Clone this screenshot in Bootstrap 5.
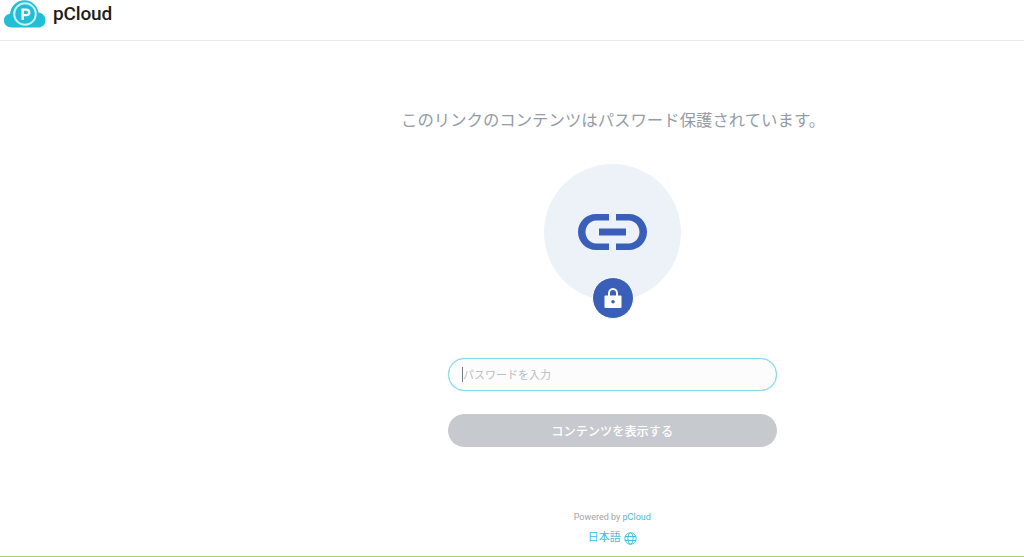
<!DOCTYPE html>
<html lang="ja">
<head>
<meta charset="utf-8">
<title>pCloud</title>
<link rel="stylesheet" href="https://cdn.jsdelivr.net/npm/bootstrap@5.3.0/dist/css/bootstrap.min.css">
<style>
html,body{height:100%;overflow:hidden}
body{font-family:Roboto,"Noto Sans CJK JP",sans-serif;background:#fff;display:flex;flex-direction:column;height:557px;border-bottom:1px solid #a5d078}
.top-bar{height:41px;border-bottom:1px solid #e9e9e9;flex:none}
.brand-name{font-family:Roboto,sans-serif;font-weight:500;font-size:19px;line-height:28px;color:#1c1c1c;letter-spacing:-.15px;margin-left:7px}
.logo-wrap{padding:0 0 0 3px;height:28px}
.main-col{width:328.500px;margin-left:448px}
.prompt{font-size:16.400px;line-height:24px;color:#939ca4;white-space:nowrap;margin:68px 0 0 -47px;width:425px}
.illus{position:relative;width:137px;height:137px;border-radius:50%;background:#edf2f9;margin:31px 0 0 96px}
.link-ico{display:block;position:absolute;left:34px;top:50px}
.lock-badge{position:absolute;left:48px;top:113px;width:42px;height:42px;border-radius:50%;background:#3a5fb8;border:1px solid #fff;display:flex;align-items:center;justify-content:center}
.input-wrap{position:relative;margin-top:57px}
.pass-input{height:33px;border-radius:17px;border:1px solid #7edbe8;background:#fcfcfc;font-size:11px;padding:1px 14px 0;color:#333;box-shadow:0 0 1px #7edbe8}
.pass-input::placeholder{color:#bdbdbd}
.pass-input:focus{border-color:#7edbe8;background:#fcfcfc;box-shadow:0 0 1px #7edbe8}
.fake-caret{position:absolute;left:14px;top:9px;width:1px;height:15px;background:#777}
.show-btn{margin-top:23px;height:33px;width:100%;border-radius:17px;border:0;background:#c6c9cd;color:#fff;font-size:12.200px;font-weight:500;padding:4px 0 0}
.show-btn:disabled{background:#c6c9cd;color:#fff;opacity:1}
.foot{margin-top:64px;text-align:center}
.powered{font-size:9px;line-height:13px;color:#a3a3a3}
.powered a{color:#3cc1d6;text-decoration:none}
.lang{font-size:11px;line-height:16px;color:#3cc1d6;margin-top:6px;display:flex;justify-content:center;align-items:center;gap:3px}
</style>
</head>
<body>
<header class="top-bar d-flex align-items-start">
  <div class="logo-wrap d-flex align-items-start">
    <svg width="43" height="28" viewBox="0 0 43 28" aria-label="pCloud logo">
      <path d="M9 27.500C4 27.500 1 24.500 1 20.500C1 16.500 3.800 14 7 13.700C8 6 14 .3 21.500 .3C29 .3 34.500 6 35.500 12.500C39.500 13 42.500 16 42.500 20.200C42.500 24.500 39.500 27.500 35 27.500Z" fill="#20bfd6"/>
      <circle cx="22" cy="14" r="10.800" fill="none" stroke="#c9f1f6" stroke-width="2"/>
      <path fill-rule="evenodd" d="M18.500 20V8.500H23.200C25.800 8.500 27.500 10.200 27.500 12.400C27.500 14.600 25.800 16.300 23.200 16.300H21V20ZM21 10.800V14H23C24.300 14 25 13.300 25 12.400C25 11.500 24.300 10.800 23 10.800Z" fill="#fff"/>
    </svg>
    <span class="brand-name">pCloud</span>
  </div>
</header>
<main class="main-col flex-grow-1">
  <p class="prompt">このリンクのコンテンツはパスワード保護されています。</p>
  <div class="illus">
    <svg class="link-ico" width="70" height="36" viewBox="0 0 70 36" fill="#3a5fb8">
      <path d="M31 0V6.500H18C12.500 6.500 7.500 11.500 7.500 18C7.500 24.500 12.500 29.500 18 29.500H31V36H18C8 36 0 28 0 18C0 8 8 0 18 0Z"/>
      <path d="M38 0V6.500H51C56.500 6.500 61.500 11.500 61.500 18C61.500 24.500 56.500 29.500 51 29.500H38V36H51C61 36 69 28 69 18C69 8 61 0 51 0Z"/>
      <rect x="21" y="14.500" width="27" height="7"/>
    </svg>
    <div class="lock-badge">
      <svg width="18" height="22" viewBox="0 0 18 22">
        <path d="M5 9V6.200C5 3.800 6.700 2 9 2C11.300 2 13 3.800 13 6.200V9" fill="none" stroke="#fff" stroke-width="2"/>
        <path fill-rule="evenodd" d="M1.500 8.500H16.500A1 1 0 0 1 17.500 9.500V20A1 1 0 0 1 16.500 21H1.500A1 1 0 0 1 .5 20V9.500A1 1 0 0 1 1.500 8.500ZM9 13A1.800 1.800 0 1 0 9 16.600A1.800 1.800 0 1 0 9 13Z" fill="#fff"/>
      </svg>
    </div>
  </div>
  <div class="input-wrap">
    <input class="form-control pass-input" type="password" placeholder="パスワードを入力">
    <span class="fake-caret"></span>
  </div>
  <button class="btn show-btn" type="button" disabled>コンテンツを表示する</button>
  <div class="foot">
    <div class="powered">Powered by <a href="#">pCloud</a></div>
    <div class="lang">日本語
      <svg width="13" height="13" viewBox="0 0 13 13" fill="none" stroke="#3cc1d6" stroke-width="1">
        <circle cx="6.500" cy="6.500" r="5.700"/><ellipse cx="6.500" cy="6.500" rx="2.600" ry="5.700"/><path d="M1 4.500H12M1 8.500H12"/>
      </svg>
    </div>
  </div>
</main>
</body>
</html>
